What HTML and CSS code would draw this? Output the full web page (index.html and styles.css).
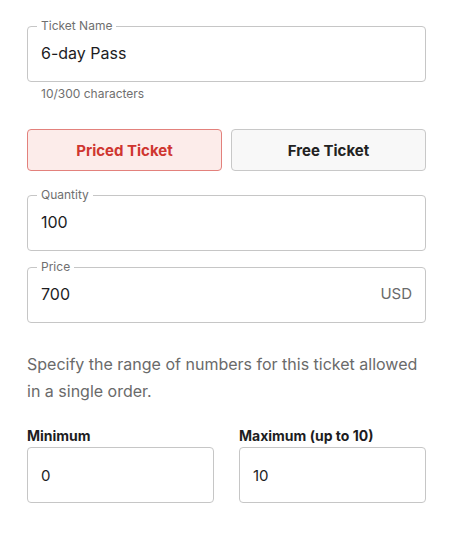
FILE: index.html
```html
<!DOCTYPE html>
<html lang="en">
<head>
<meta charset="utf-8">
<link rel="stylesheet" href="styles.css">
</head>
<body>
<form class="form">
  <div class="group">
    <fieldset class="field">
      <legend class="field-label">Ticket Name</legend>
      <div class="field-value">6-day Pass</div>
    </fieldset>
    <div class="helper">10/300 characters</div>
  </div>

  <div class="toggle">
    <button type="button" class="toggle-btn active">Priced Ticket</button>
    <button type="button" class="toggle-btn">Free Ticket</button>
  </div>

  <fieldset class="field quantity">
    <legend class="field-label">Quantity</legend>
    <div class="field-value">100</div>
  </fieldset>

  <fieldset class="field price">
    <legend class="field-label">Price</legend>
    <div class="field-value row"><span>700</span><span class="unit">USD</span></div>
  </fieldset>

  <p class="desc">Specify the range of numbers for this ticket allowed in a single order.</p>

  <div class="range">
    <div class="range-col">
      <div class="range-label">Minimum</div>
      <div class="box">0</div>
    </div>
    <div class="range-col">
      <div class="range-label">Maximum (up to 10)</div>
      <div class="box">10</div>
    </div>
  </div>
</form>
</body>
</html>
```

FILE: styles.css
```css
* { box-sizing: border-box; }
html, body { margin: 0; padding: 0; background: #ffffff; }
body {
  font-family: "Inter", "Noto Sans", sans-serif;
  color: #1d1d1f;
}
.form {
  width: 399px;
  margin-left: 27px;
  padding-top: 19px;
  display: flex;
  flex-direction: column;
}
.field {
  margin: 0;
  padding: 0 13px 7px 13px;
  border: 1px solid #c6c6c6;
  border-radius: 4px;
  min-width: 0;
}
.field-label {
  padding: 0 4px;
  margin-left: -4px;
  font-size: 12px;
  line-height: 14px;
  color: #6f6f6f;
}
.field-value {
  height: 41px;
  display: flex;
  align-items: center;
  font-size: 16px;
  color: #1d1d1f;
  padding-bottom: 2px;
}
.field-value.row {
  justify-content: space-between;
}
.unit {
  color: #6a6a6a;
  font-size: 15px;
}
.helper {
  margin: 5px 0 0 14px;
  font-size: 12px;
  line-height: 14px;
  color: #6f6f6f;
}
.toggle {
  margin-top: 28px;
  display: flex;
  gap: 9px;
}
.toggle-btn {
  flex: 1;
  height: 42px;
  border-radius: 4px;
  border: 1px solid #c8c8c8;
  background: #f8f8f8;
  font-family: inherit;
  font-size: 15px;
  font-weight: 700;
  color: #222222;
}
.toggle-btn.active {
  background: #fcecea;
  border-color: #e3817c;
  color: #cf3630;
}
.quantity { margin-top: 17px; }
.price { margin-top: 9px; }
.desc {
  margin: 28px 0 0 0;
  font-size: 16px;
  line-height: 27px;
  color: #6a6a6a;
}
.range {
  margin-top: 22px;
  display: grid;
  grid-template-columns: 1fr 1fr;
  column-gap: 25px;
}
.range-label {
  font-size: 14px;
  font-weight: 700;
  line-height: 18px;
  color: #1d1d1f;
  margin-bottom: 2px;
}
.box {
  height: 56px;
  border: 1px solid #c6c6c6;
  border-radius: 4px;
  display: flex;
  align-items: center;
  padding-left: 13px;
  font-size: 15px;
  color: #1d1d1f;
}
```
